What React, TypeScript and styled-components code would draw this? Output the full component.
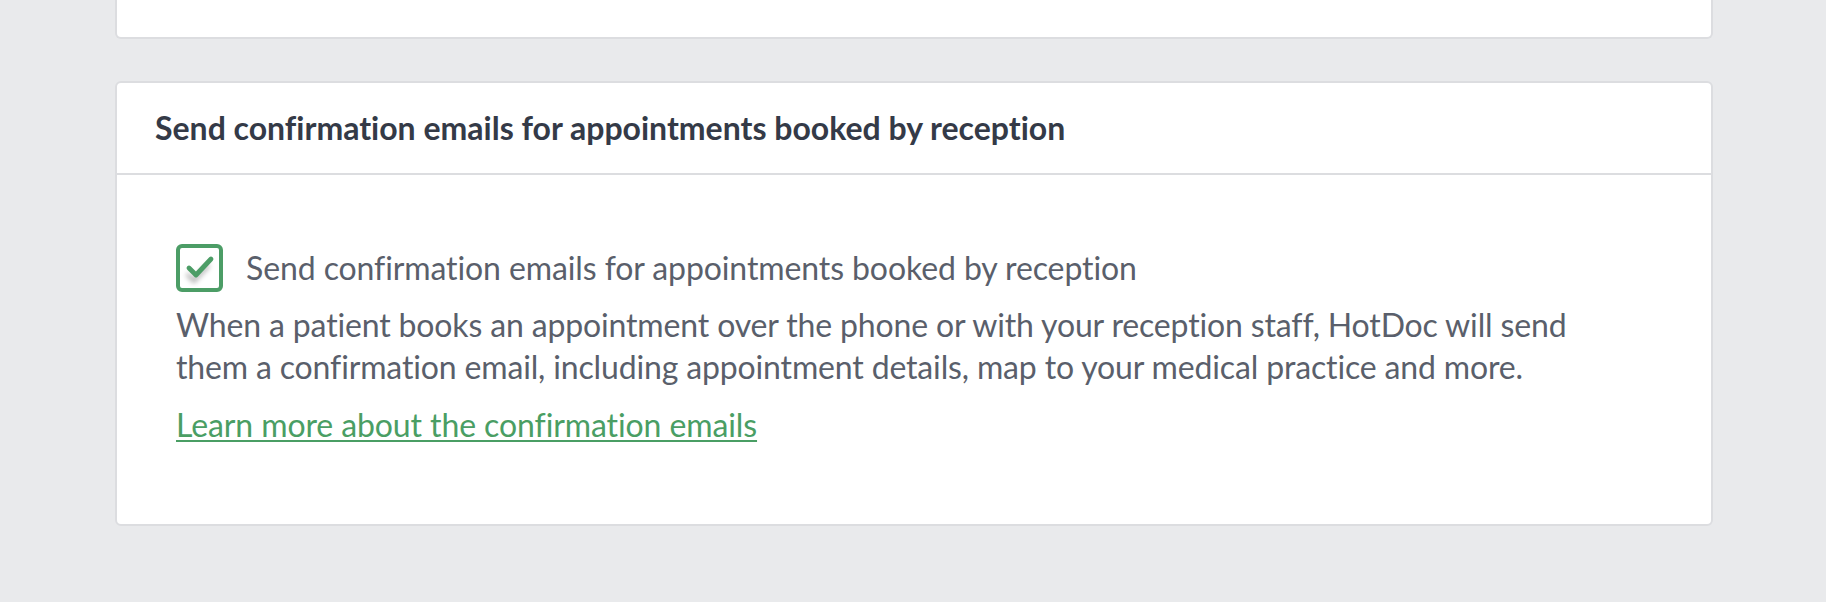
import React from "react";
import styled, { createGlobalStyle } from "styled-components";

const Global = createGlobalStyle`
  html, body { margin: 0; padding: 0; background: #e9eaec; }
  body {
    font-family: Lato, "Open Sans", sans-serif;
    font-variant-ligatures: none;
    -webkit-font-smoothing: antialiased;
  }
  * { box-sizing: border-box; }
`;

const Page = styled.div`
  display: flex;
  flex-direction: column;
  gap: 42px;
  padding: 0 113px 0 115px;
  min-height: 602px;
  background: #e9eaec;
`;

const Card = styled.section<{ $clipped?: boolean }>`
  background: #ffffff;
  border: 2px solid #dcdde0;
  border-radius: ${(p) => (p.$clipped ? "0 0 6px 6px" : "6px")};
  ${(p) => (p.$clipped ? "border-top: none; height: 39px;" : "")}
`;

const CardHeader = styled.header`
  height: 92px;
  display: flex;
  align-items: center;
  padding: 0 38px;
  border-bottom: 2px solid #dcdde0;
`;

const Title = styled.h2`
  margin: 0;
  font-size: 32px;
  font-weight: 700;
  color: #343a47;
  line-height: 1;
`;

const CardBody = styled.div`
  padding: 69px 59px 78px;
  display: flex;
  flex-direction: column;
`;

const CheckRow = styled.label`
  display: flex;
  align-items: center;
  gap: 23px;
  cursor: pointer;
`;

const Box = styled.span`
  width: 47px;
  height: 48px;
  flex: none;
  border: 4px solid #4c9d66;
  border-radius: 6px;
  background: #fff;
  display: flex;
  align-items: center;
  justify-content: center;
`;

const BodyText = styled.span`
  font-size: 32px;
  line-height: 42px;
  letter-spacing: -0.1px;
  color: #5a5f6b;
`;

const Description = styled.p`
  margin: 12px 0 0;
  font-size: 32px;
  line-height: 42px;
  letter-spacing: -0.15px;
  color: #5a5f6b;
  max-width: 1420px;
`;

const Link = styled.a`
  margin-top: 16px;
  align-self: flex-start;
  font-size: 32px;
  line-height: 42px;
  letter-spacing: -0.1px;
  color: #4a9e64;
  text-decoration: underline;
  text-decoration-thickness: 2px;
  text-underline-offset: 3px;
`;

const Check = () => (
  <svg width="38" height="38" viewBox="0 0 38 38">
    <defs>
      <filter id="sh" x="-50%" y="-50%" width="200%" height="200%">
        <feGaussianBlur stdDeviation="2.4" />
      </filter>
    </defs>
    <path
      d="M8 20 L15 27 L30 11"
      fill="none"
      stroke="rgba(0,0,0,0.3)"
      strokeWidth="4"
      filter="url(#sh)"
      transform="translate(-2,5)"
    />
    <path
      d="M8 19 L15 26 L30 10"
      fill="none"
      stroke="#4c9d66"
      strokeWidth="4.8"
      strokeLinecap="round"
      strokeLinejoin="round"
    />
  </svg>
);

export default function App() {
  return (
    <>
      <Global />
      <Page>
        <Card $clipped />
        <Card>
          <CardHeader>
            <Title>Send confirmation emails for appointments booked by reception</Title>
          </CardHeader>
          <CardBody>
            <CheckRow>
              <Box>
                <Check />
              </Box>
              <BodyText>Send confirmation emails for appointments booked by reception</BodyText>
            </CheckRow>
            <Description>
              When a patient books an appointment over the phone or with your reception staff, HotDoc will send them a confirmation email, including appointment details, map to your medical practice and more.
            </Description>
            <Link href="#">Learn more about the confirmation emails</Link>
          </CardBody>
        </Card>
      </Page>
    </>
  );
}
